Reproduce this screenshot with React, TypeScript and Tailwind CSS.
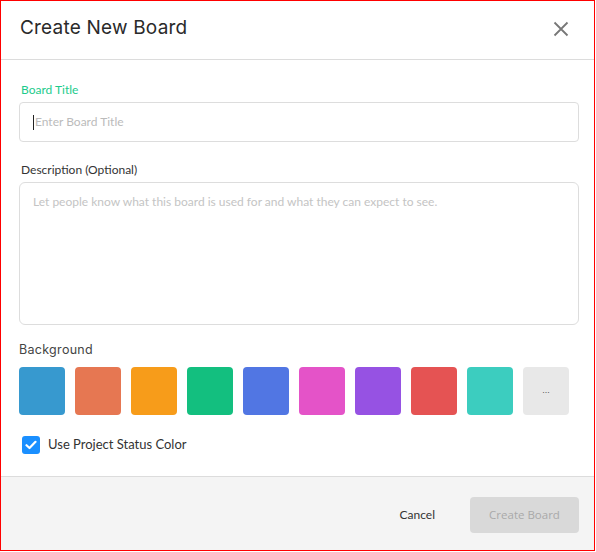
import { useState } from 'react';

const swatches = ['#3799cf', '#e67752', '#f79c1a', '#13bf7f', '#5176e3', '#e453c8', '#9652e3', '#e55353', '#3ccdbf'];

export default function App() {
    const [selected, setSelected] = useState<string | null>(null);
    const [useStatus, setUseStatus] = useState(true);

    return (
        <div className="w-[595px] h-[551px] border border-[#ff0000] bg-white flex flex-col font-['Lato',sans-serif]">
            {/* Header */}
            <div className="h-[59px] shrink-0 border-b border-[#dcdcdc] flex items-center justify-between pl-[19px] pr-[25px] pb-[3px]">
                <h2 className="font-['Inter',sans-serif] text-[19px] font-normal tracking-[0.2px] text-[#2a2a2a]">Create New Board</h2>
                <button className="text-[#777]" aria-label="Close">
                    <svg width="16" height="16" viewBox="0 0 16 16" fill="none" stroke="currentColor" strokeWidth="1.8">
                        <path d="M1.5 1.5 L14.5 14.5 M14.5 1.5 L1.5 14.5" />
                    </svg>
                </button>
            </div>

            {/* Body */}
            <div className="h-[416px] shrink-0 pl-[18px] pr-[15px] pt-[22px]">
                <label className="block pl-[2px] text-[12px] leading-[16px] text-[#1ccb8c]">Board Title</label>
                <div className="mt-[4px] h-[40px] rounded-[4px] border border-[#dddddd] flex items-center pl-[13px] text-[12px] text-[#bbbbbb]">
                    <span className="w-px h-[15px] bg-[#222] mr-px"></span>
                    Enter Board Title
                </div>

                <label className="block mt-[20px] pl-[2px] text-[12px] leading-[16px] text-[#333]">Description (Optional)</label>
                <div className="mt-[4px] h-[143px] rounded-[6px] border border-[#dddddd] pt-[11px] px-[13px] text-[12px] leading-[16px] text-[#c4c4c4]">
                    Let people know what this board is used for and what they can expect to see.
                </div>

                <div className="mt-[17px] font-['Inter',sans-serif] text-[12.5px] leading-[16px] text-[#444] tracking-[0.3px]">Background</div>
                <div className="mt-[9px] flex gap-[10px]">
                    {swatches.map((c) => (
                        <button
                            key={c}
                            onClick={() => setSelected(c)}
                            className="w-[46px] h-[48px] rounded-[4px]"
                            style={{ backgroundColor: c, outline: selected === c ? '2px solid #333' : 'none' }}
                        />
                    ))}
                    <button className="w-[46px] h-[48px] rounded-[4px] bg-[#e8e8e8] flex items-center justify-center text-[9px] text-[#555] font-['Liberation_Sans',sans-serif]">
                        ...
                    </button>
                </div>

                <label className="mt-[20px] ml-[3px] flex items-center gap-[8px] cursor-pointer" onClick={() => setUseStatus(!useStatus)}>
                    <span className={`w-[18px] h-[18px] rounded-[3px] flex items-center justify-center ${useStatus ? 'bg-[#1a8fff]' : 'border border-[#bbb] bg-white'}`}>
                        {useStatus && (
                            <svg width="12" height="10" viewBox="0 0 12 10" fill="none" stroke="white" strokeWidth="2.2" strokeLinecap="round" strokeLinejoin="round">
                                <path d="M1.5 5.2 L4.5 8 L10.5 1.8" />
                            </svg>
                        )}
                    </span>
                    <span className="text-[13px] text-[#333]">Use Project Status Color</span>
                </label>
            </div>

            {/* Footer */}
            <div className="flex-1 border-t border-[#dcdcdc] bg-[#f4f4f4] flex items-start justify-end pt-[20px] pr-[15px] gap-[35px]">
                <button className="h-[36px] text-[12px] text-[#333]">Cancel</button>
                <button disabled className="w-[109px] h-[36px] rounded-[4px] bg-[#d9d9d9] text-[11.5px] text-[#a9a9a9] font-['Open_Sans',sans-serif]">
                    Create Board
                </button>
            </div>
        </div>
    );
}
